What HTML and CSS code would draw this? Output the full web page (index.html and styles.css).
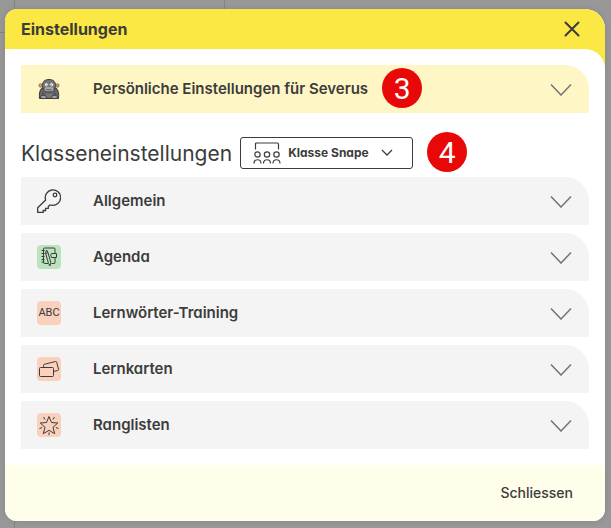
FILE: index.html
```html
<!DOCTYPE html>
<html lang="de">
<head>
<meta charset="utf-8">
<meta name="viewport" content="width=device-width, initial-scale=1">
<title>Einstellungen</title>
<link rel="stylesheet" href="styles.css">
</head>
<body>
<main class="dialog" role="dialog" aria-labelledby="title">
  <header class="dialog-head">
    <h1 id="title">Einstellungen</h1>
    <button class="close" type="button" aria-label="Dialog beenden">
      <svg width="16" height="16" viewBox="0 0 16 16"><path d="M1.500 1.500l13 13M14.500 1.500l-13 13"/></svg>
    </button>
  </header>
  <div class="dialog-wrap">
    <div class="dialog-body">
      <button class="row row-personal" type="button">
        <svg class="icon" viewBox="0 0 24 24">
          <ellipse cx="3.500" cy="8.500" rx="1.500" ry="1.800" fill="#e8a048" stroke="#555" stroke-width=".7"/>
          <ellipse cx="20.500" cy="8.500" rx="1.500" ry="1.800" fill="#e8a048" stroke="#555" stroke-width=".7"/>
          <path d="M5 11C2.500 13 2 17 2.500 21.500h19c.5-4.500 0-8.500-2.500-10.500z" fill="#666" stroke="#3a3a3a"/>
          <path d="M12 2.500C7.500 2.500 5.500 5 5.500 8.500s2 6.500 6.500 6.500 6.500-3 6.500-6.500S16.500 2.500 12 2.500z" fill="#777" stroke="#3a3a3a"/>
          <ellipse cx="12" cy="12" rx="5" ry="2.700" fill="#a8a8a8" stroke="#555" stroke-width=".7"/>
          <circle cx="9.500" cy="7.800" r="2" fill="#f2f2f2" stroke="#666" stroke-width=".6"/>
          <circle cx="14.500" cy="7.800" r="2" fill="#f2f2f2" stroke="#666" stroke-width=".6"/>
          <circle cx="10" cy="8" r=".6" fill="#222" stroke="none"/><circle cx="14" cy="8" r=".6" fill="#222" stroke="none"/>
          <path d="M9.500 12.500q2.500 1 5 0" stroke="#444" stroke-width=".8"/>
          <path d="M6.500 14.500q-1 2 0 4M17.500 14.500q1 2 0 4" stroke="#444" stroke-width=".8"/>
          <path d="M9 16.500h6v4H9z" fill="#777" stroke="none"/>
          <ellipse cx="6.500" cy="20" rx="3" ry="1.700" fill="#a0a0a0" stroke="#3a3a3a" stroke-width=".8"/>
          <ellipse cx="17.500" cy="20" rx="3" ry="1.700" fill="#a0a0a0" stroke="#3a3a3a" stroke-width=".8"/>
        </svg>
        <span class="label">Persönliche Einstellungen für Severus</span>
        <span class="step">3</span>
        <svg class="chevron" viewBox="0 0 22 14"><path d="M1 2.500L11 13 21 2.500"/></svg>
      </button>

      <section class="classes">
        <div class="class-head">
          <h2>Klasseneinstellungen</h2>
          <div class="picker">
            <svg class="picker-icon" viewBox="0 0 28 22">
              <path d="M2.500 7.500V2q0-1 1-1h21q1 0 1 1v5.500"/>
              <circle cx="4.500" cy="12.500" r="2.700"/><circle cx="14" cy="12.500" r="2.700"/><circle cx="23.500" cy="12.500" r="2.700"/>
              <path d="M1 21.500c0-5 7-5 7 0M10.500 21.500c0-5 7-5 7 0M20 21.500c0-5 7-5 7 0"/>
            </svg>
            <select aria-label="Klasse"><option>Klasse Snape</option></select>
            <svg class="picker-arrow" viewBox="0 0 12 7"><path d="M1 1l5 5 5-5"/></svg>
          </div>
          <span class="step">4</span>
        </div>

        <button class="row" type="button">
          <svg class="icon line" viewBox="0 0 24 24">
            <path d="M.7 18.800L8.600 11A7.700 7.700 0 1 1 14.500 16.200L12.600 16.200 11.300 17.500V19.300H8.600V21.500H6.200V23.300H.7z"/>
            <circle cx="18" cy="6" r="1.800"/>
          </svg>
          <span class="label">Allgemein</span>
          <svg class="chevron" viewBox="0 0 22 14"><path d="M1 2.500L11 13 21 2.500"/></svg>
        </button>
        <button class="row" type="button">
          <svg class="icon tile green fine" viewBox="0 0 24 24">
            <path d="M6.500 4q0-1 1-1h9.500q1 0 1 1v4M6.500 4v13.500q0 1 1 1H11M14.500 18.500H17q1 0 1-1V13"/>
            <path d="M4.500 5.500h3M4.500 8.500h3M4.500 11.500h3M4.500 14.500h3M4.500 17h3"/>
            <path d="M14.500 8.500h5v4h-5q-1.500-2 0-4z"/>
            <path d="M9.500 5L8.500 8l3 10.500 1.500 2.500.8-3.500L10.800 7zM8.800 8.500l2-.8"/>
          </svg>
          <span class="label">Agenda</span>
          <svg class="chevron" viewBox="0 0 22 14"><path d="M1 2.500L11 13 21 2.500"/></svg>
        </button>
        <button class="row" type="button">
          <span class="icon tile abc">ABC</span>
          <span class="label">Lernwörter-Training</span>
          <svg class="chevron" viewBox="0 0 22 14"><path d="M1 2.500L11 13 21 2.500"/></svg>
        </button>
        <button class="row" type="button">
          <svg class="icon tile fine" viewBox="0 0 24 24">
            <rect x="2.500" y="10.500" width="14" height="9" rx="1"/>
            <path d="M7 10.500L6.500 8.500q-.2-1 .8-1.200L18.500 4.500q1-.2 1.200.8l1.800 7q.2 1-.8 1.200l-4.200 1"/>
          </svg>
          <span class="label">Lernkarten</span>
          <svg class="chevron" viewBox="0 0 22 14"><path d="M1 2.500L11 13 21 2.500"/></svg>
        </button>
        <button class="row" type="button">
          <svg class="icon tile fine" viewBox="0 0 24 24">
            <path d="M12 3.500l2.500 6 6.300.5-4.800 4.200 1.700 6.500L12 17.300l-5.700 3.400L8 14.200 3.200 10l6.300-.5z"/>
            <path d="M6.500 4l1.500 2.500M17.500 4L16 6.500M2.500 15.500l2.700-1M21.500 15.500l-2.700-1M12 19.500v2.700"/>
          </svg>
          <span class="label">Ranglisten</span>
          <svg class="chevron" viewBox="0 0 22 14"><path d="M1 2.500L11 13 21 2.500"/></svg>
        </button>
      </section>
    </div>
  </div>
  <footer class="dialog-foot">
    <button class="done" type="button">Schliessen</button>
  </footer>
</main>
</body>
</html>
```
FILE: styles.css
```css
* {
  box-sizing: border-box;
}

body {
  margin: 0;
  padding: 9px 6px 7px 5px;
  min-height: 100vh;
  color: #3c3c3b;
  font-family: Inter, "Liberation Sans", sans-serif;
  font-feature-settings: "cv11";
  background:
    linear-gradient(#848484, #848484) 14px 0 / 1px 100% no-repeat,
    linear-gradient(#848484, #848484) 224px 0 / 1px 20px no-repeat,
    linear-gradient(#848484, #848484) 0 32px / 14px 1px no-repeat,
    #989898;
}

button,
select {
  margin: 0;
  padding: 0;
  border: 0;
  background: none;
  color: inherit;
  font: inherit;
  font-feature-settings: inherit;
  cursor: pointer;
}

svg {
  fill: none;
  stroke: #3c3c3b;
  flex: none;
}

h1,
h2 {
  margin: 0;
}

.dialog {
  border-radius: 12px 20px 12px 12px;
  overflow: hidden;
  background: #fff;
  box-shadow: 0 0 6px rgba(0, 0, 0, 0.12);
}

.dialog-head {
  display: flex;
  align-items: center;
  justify-content: space-between;
  height: 40px;
  padding: 0 25px 0 16px;
  background: #fbe844;
}

.dialog-head h1 {
  font-size: 16px;
  font-weight: 700;
}

.close {
  display: flex;
}

.close svg {
  stroke-width: 2;
  stroke-linecap: round;
}

.dialog-wrap {
  background: #fbe844;
}

.dialog-body {
  display: grid;
  gap: 24px;
  padding: 16px;
  border-top-right-radius: 20px;
  background: #fff;
}

.row {
  display: flex;
  align-items: center;
  width: 100%;
  height: 48px;
  padding: 0 17px 0 16px;
  border-top-right-radius: 24px;
  background: #f4f4f4;
  text-align: left;
}

.row-personal {
  background: #fff6c5;
}

.icon {
  width: 24px;
  height: 24px;
  flex: none;
}

.line {
  stroke-width: 1.3;
}

.fine {
  stroke-width: 1;
}

.tile {
  border-radius: 4px;
  background: #f9d1bc;
}

.green {
  background: #bbe3bd;
}

.abc {
  display: grid;
  place-items: center;
  font: 400 11px/24px Roboto, sans-serif;
}

.label {
  margin-left: 32px;
  padding-bottom: 2px;
  font-size: 15px;
  font-weight: 600;
}

.chevron {
  width: 22px;
  height: 14px;
  margin-left: auto;
  stroke: #6f7478;
  stroke-width: 1.5;
}

.step {
  display: grid;
  place-items: center;
  width: 40px;
  height: 40px;
  margin: 0 0 2px 14px;
  padding-top: 2px;
  border-radius: 50%;
  background: #e90808;
  color: #fff;
  font: 400 30px/38px Roboto, sans-serif;
}

.classes {
  display: grid;
  gap: 8px;
}

.class-head {
  display: flex;
  align-items: center;
  height: 32px;
}

.class-head h2 {
  font-size: 21px;
  font-weight: 400;
}

.picker {
  display: flex;
  align-items: center;
  height: 32px;
  margin-left: 8px;
  padding: 0 19px 0 12px;
  border: 1px solid #3c3c3b;
  border-radius: 3px;
}

.picker-icon {
  width: 28px;
  height: 22px;
  stroke-width: 1.2;
}

.picker select {
  appearance: none;
  margin-left: 7px;
  padding-bottom: 2px;
  font-size: 12px;
  font-weight: 700;
}

.picker-arrow {
  width: 12px;
  height: 7px;
  margin: 0 0 2px 12px;
  stroke-width: 1.3;
  pointer-events: none;
}

.dialog-foot {
  display: flex;
  align-items: center;
  justify-content: flex-end;
  height: 56px;
  padding: 0 32px 2px;
  background: #fffeea;
}

.done {
  font-size: 14px;
  font-weight: 500;
}
```
